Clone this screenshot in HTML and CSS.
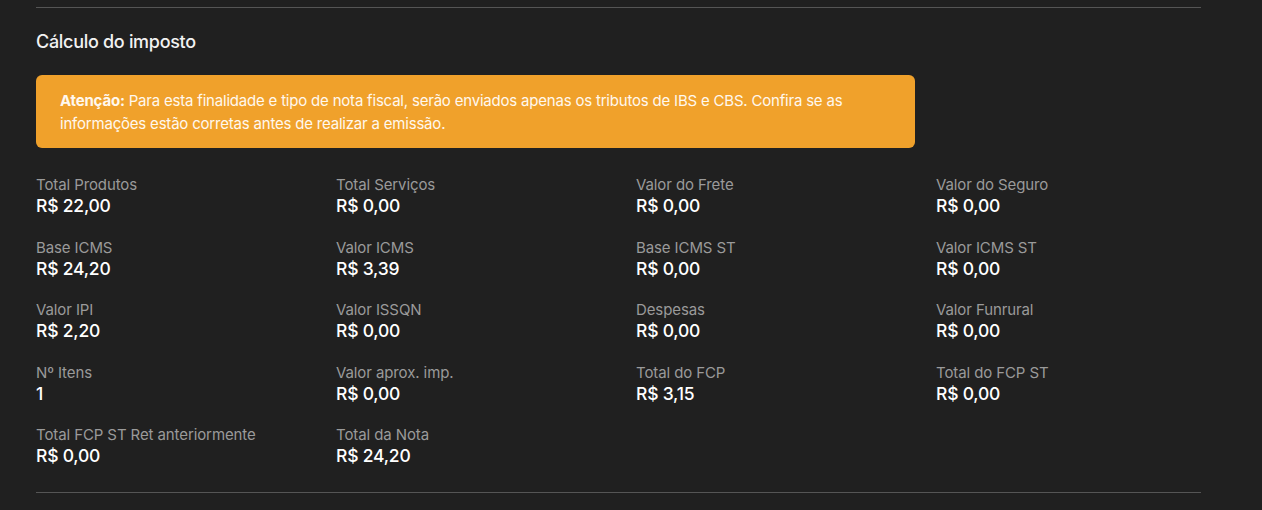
FILE: index.html
```html
<!DOCTYPE html>
<html lang="pt-BR">
<head>
<meta charset="utf-8">
<link rel="stylesheet" href="styles.css">
</head>
<body>
<section class="section">
  <h2 class="title">Cálculo do imposto</h2>
  <div class="alert"><strong>Atenção:</strong> Para esta finalidade e tipo de nota fiscal, serão enviados apenas os tributos de IBS e CBS. Confira se as informações estão corretas antes de realizar a emissão.</div>
  <div class="grid">
    <div class="item"><div class="label">Total Produtos</div><div class="value">R$ 22,00</div></div>
    <div class="item"><div class="label">Total Serviços</div><div class="value">R$ 0,00</div></div>
    <div class="item"><div class="label">Valor do Frete</div><div class="value">R$ 0,00</div></div>
    <div class="item"><div class="label">Valor do Seguro</div><div class="value">R$ 0,00</div></div>
    <div class="item"><div class="label">Base ICMS</div><div class="value">R$ 24,20</div></div>
    <div class="item"><div class="label">Valor ICMS</div><div class="value">R$ 3,39</div></div>
    <div class="item"><div class="label">Base ICMS ST</div><div class="value">R$ 0,00</div></div>
    <div class="item"><div class="label">Valor ICMS ST</div><div class="value">R$ 0,00</div></div>
    <div class="item"><div class="label">Valor IPI</div><div class="value">R$ 2,20</div></div>
    <div class="item"><div class="label">Valor ISSQN</div><div class="value">R$ 0,00</div></div>
    <div class="item"><div class="label">Despesas</div><div class="value">R$ 0,00</div></div>
    <div class="item"><div class="label">Valor Funrural</div><div class="value">R$ 0,00</div></div>
    <div class="item"><div class="label">Nº Itens</div><div class="value">1</div></div>
    <div class="item"><div class="label">Valor aprox. imp.</div><div class="value">R$ 0,00</div></div>
    <div class="item"><div class="label">Total do FCP</div><div class="value">R$ 3,15</div></div>
    <div class="item"><div class="label">Total do FCP ST</div><div class="value">R$ 0,00</div></div>
    <div class="item"><div class="label">Total FCP ST Ret anteriormente</div><div class="value">R$ 0,00</div></div>
    <div class="item"><div class="label">Total da Nota</div><div class="value">R$ 24,20</div></div>
  </div>
</section>
</body>
</html>
```
FILE: styles.css
```css
html, body {
  margin: 0;
  padding: 0;
  background: #202020;
}
body {
  font-family: Inter, "Noto Sans", sans-serif;
  color: #ffffff;
  padding-top: 7px;
}
.section {
  margin-left: 36px;
  width: 1165px;
  border-top: 1px solid #555555;
  border-bottom: 1px solid #555555;
  padding: 22px 0 25px;
}
.title {
  margin: 0;
  font-size: 18px;
  line-height: 24px;
  font-weight: 500;
  letter-spacing: -0.3px;
  color: #f2f2f2;
}
.alert {
  margin-top: 21px;
  width: 831px;
  background: #f0a12b;
  border-radius: 6px;
  padding: 14px 24px 13px;
  font-size: 15px;
  line-height: 23px;
  letter-spacing: -0.2px;
  color: #fff8ee;
}
.alert strong {
  font-weight: 700;
}
.grid {
  margin-top: 27px;
  display: grid;
  grid-template-columns: repeat(4, 1fr);
  column-gap: 35px;
  row-gap: 20.5px;
}
.label {
  font-size: 15px;
  line-height: 20px;
  letter-spacing: -0.1px;
  color: #9a9a9a;
}
.value {
  font-size: 17.5px;
  line-height: 22px;
  font-weight: 500;
  letter-spacing: -0.2px;
  color: #ffffff;
}
```
